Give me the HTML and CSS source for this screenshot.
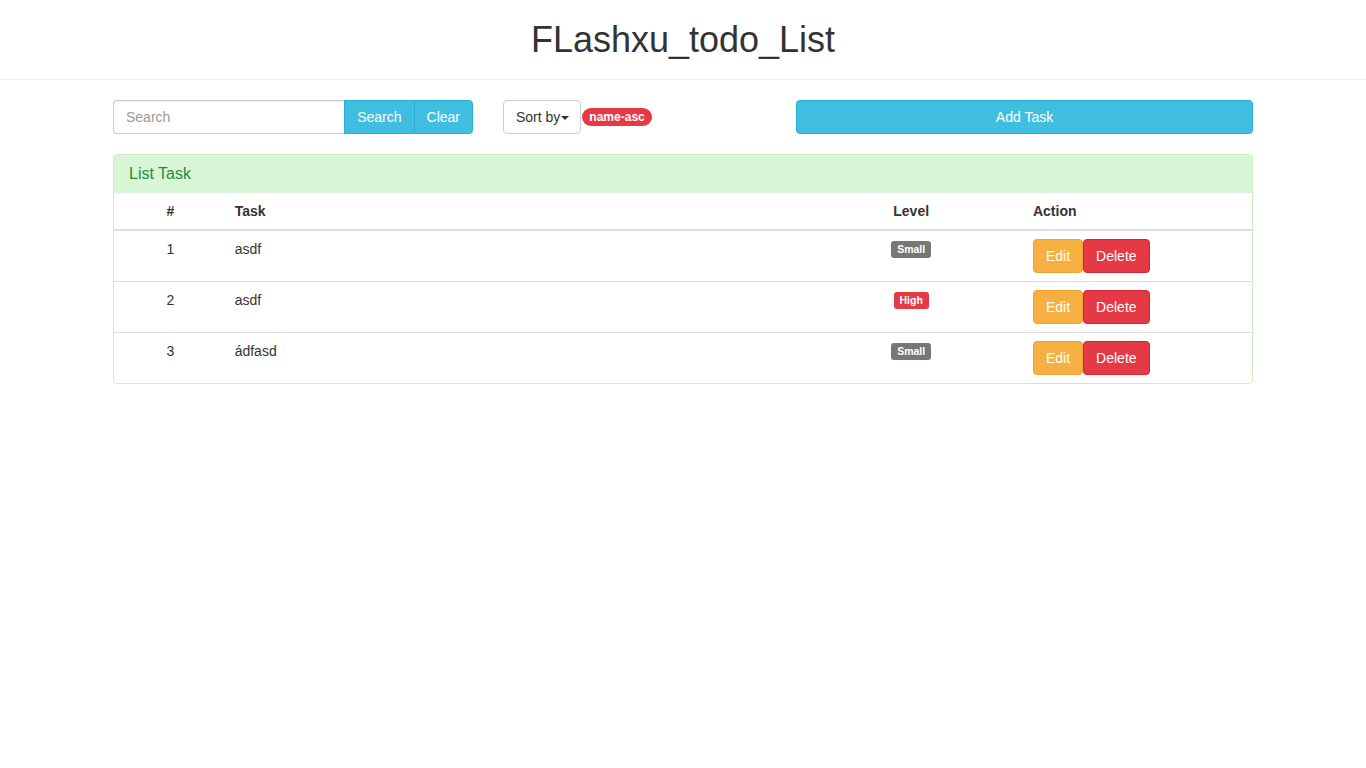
FILE: index.html
```html
<!DOCTYPE html>
<html lang="en">
<head>
<meta charset="utf-8">
<title>FLashxu_todo_List</title>
<link rel="stylesheet" href="styles.css">
</head>
<body>
<header class="page-header">
  <h1 class="title">FLashxu_todo_List</h1>
</header>
<main class="container">
  <div class="toolbar">
    <div class="col-search">
      <div class="input-group">
        <input class="search-input" type="text" placeholder="Search">
        <button class="btn btn-info btn-join">Search</button>
        <button class="btn btn-info btn-last">Clear</button>
      </div>
    </div>
    <div class="col-sort">
      <button class="btn btn-default">Sort by<span class="caret"></span></button>
      <span class="badge">name-asc</span>
    </div>
    <div class="col-add">
      <button class="btn btn-info btn-block">Add Task</button>
    </div>
  </div>

  <section class="panel">
    <div class="panel-heading">List Task</div>
    <table class="table">
      <colgroup>
        <col class="c-num"><col class="c-task"><col class="c-level"><col class="c-action">
      </colgroup>
      <thead>
        <tr><th class="center">#</th><th>Task</th><th class="center">Level</th><th>Action</th></tr>
      </thead>
      <tbody>
        <tr>
          <td class="center">1</td><td>asdf</td>
          <td class="center"><span class="label label-default">Small</span></td>
          <td><div class="actions"><button class="btn btn-warning">Edit</button><button class="btn btn-danger">Delete</button></div></td>
        </tr>
        <tr>
          <td class="center">2</td><td>asdf</td>
          <td class="center"><span class="label label-danger">High</span></td>
          <td><div class="actions"><button class="btn btn-warning">Edit</button><button class="btn btn-danger">Delete</button></div></td>
        </tr>
        <tr>
          <td class="center">3</td><td>ádfasd</td>
          <td class="center"><span class="label label-default">Small</span></td>
          <td><div class="actions"><button class="btn btn-warning">Edit</button><button class="btn btn-danger">Delete</button></div></td>
        </tr>
      </tbody>
    </table>
  </section>
</main>
</body>
</html>
```

FILE: styles.css
```css
* { box-sizing: border-box; }
html, body { margin: 0; padding: 0; }
body {
  font-family: "Liberation Sans", Arial, Helvetica, sans-serif;
  font-size: 14px;
  line-height: 20px;
  color: #333;
  background: #fff;
}
.page-header {
  border-bottom: 1px solid #eee;
  padding: 20px 0 19px;
  text-align: center;
}
.title {
  margin: 0;
  font-size: 36px;
  font-weight: 500;
  line-height: 40px;
  color: #333;
}
.container {
  width: 1140px;
  margin: 20px auto 0;
}
.toolbar {
  display: flex;
  align-items: center;
  height: 34px;
  margin-bottom: 20px;
}
.col-search { width: 360px; margin-right: 30px; }
.col-sort { width: 165px; display: flex; align-items: center; margin-right: 128px; }
.col-add { flex: 1; }
.input-group { display: flex; height: 34px; }
.search-input {
  flex: 1;
  min-width: 0;
  height: 34px;
  padding: 6px 12px;
  font: inherit;
  color: #555;
  border: 1px solid #ccc;
  border-right: none;
  border-radius: 4px 0 0 4px;
  box-shadow: inset 0 1px 1px rgba(0,0,0,.075);
  outline: none;
}
.search-input::placeholder { color: #999; }
.btn {
  display: inline-block;
  height: 34px;
  padding: 6px 12px;
  font: inherit;
  font-size: 14px;
  line-height: 20px;
  border: 1px solid transparent;
  border-radius: 4px;
  cursor: pointer;
  white-space: nowrap;
}
.btn-info { background: #3fbee0; border-color: #24b1d9; color: #fff; }
.btn-join { border-radius: 0; }
.btn-last { border-radius: 0 4px 4px 0; margin-left: -1px; }
.btn-default { background: #fff; border-color: #ccc; color: #333; padding: 6px 11px 6px 12px; }
.btn-block { width: 100%; }
.btn-warning { background: #f6b042; border-color: #f0a12f; color: #fff; }
.btn-danger { background: #e63946; border-color: #d42533; color: #fff; }
.caret {
  display: inline-block;
  width: 0; height: 0;
  margin-left: 1px;
  vertical-align: middle;
  border-top: 4px solid #333;
  border-left: 4px solid transparent;
  border-right: 4px solid transparent;
}
.badge {
  display: inline-block;
  margin-left: 1px;
  padding: 3px 7px;
  font-size: 12px;
  font-weight: bold;
  line-height: 12px;
  color: #fff;
  background: #e63946;
  border-radius: 10px;
}
.panel {
  border: 1px solid #c9efc4;
  border-radius: 4px;
  overflow: hidden;
}
.panel-heading {
  background: #d8f5d6;
  color: #2a8a3c;
  font-size: 16px;
  line-height: 18px;
  padding: 10px 15px;
}
.table {
  width: 100%;
  border-collapse: collapse;
  table-layout: fixed;
}
.c-num { width: 9.9%; }
.c-task { width: 50.15%; }
.c-level { width: 20%; }
.c-action { width: 19.95%; }
.table th {
  text-align: left;
  font-weight: bold;
  padding: 8px;
  line-height: 20px;
  border-bottom: 2px solid #ddd;
}
.table td {
  padding: 8px;
  line-height: 20px;
  vertical-align: top;
  border-top: 1px solid #ddd;
}
.table tbody tr:first-child td { border-top: none; }
.table th.center, .table td.center { text-align: center; }
.actions { display: flex; }
.label {
  display: inline-block;
  padding: 2px 6px 3px;
  font-size: 10.5px;
  font-weight: bold;
  line-height: 12px;
  color: #fff;
  border-radius: 3px;
  vertical-align: 1px;
}
.label-default { background: #777; }
.label-danger { background: #e63946; }
```
